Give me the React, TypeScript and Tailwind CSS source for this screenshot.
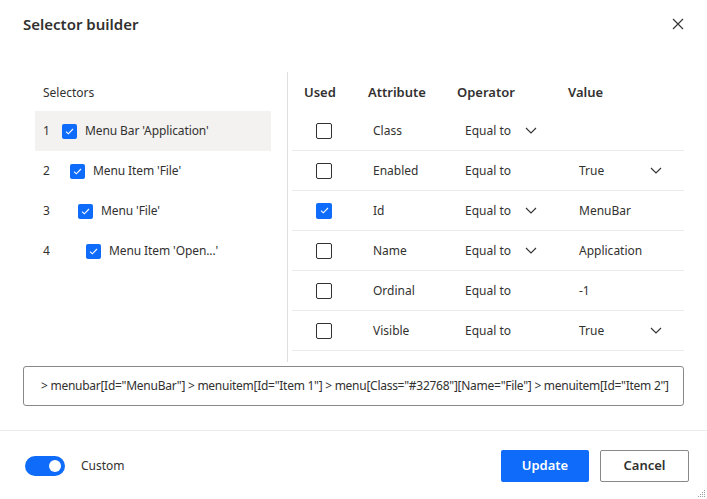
import { useState } from "react";

interface Attr {
    name: string;
    used: boolean;
    opDrop: boolean;
    value: string;
    valueDrop: boolean;
}

const selectors = [
    { n: 1, label: "Menu Bar 'Application'" },
    { n: 2, label: "Menu Item 'File'" },
    { n: 3, label: "Menu 'File'" },
    { n: 4, label: "Menu Item 'Open...'" },
];

const attrs: Attr[] = [
    { name: "Class", used: false, opDrop: true, value: "", valueDrop: false },
    { name: "Enabled", used: false, opDrop: false, value: "True", valueDrop: true },
    { name: "Id", used: true, opDrop: true, value: "MenuBar", valueDrop: false },
    { name: "Name", used: false, opDrop: true, value: "Application", valueDrop: false },
    { name: "Ordinal", used: false, opDrop: false, value: "-1", valueDrop: false },
    { name: "Visible", used: false, opDrop: false, value: "True", valueDrop: true },
];

const Check = ({ on, size = 15 }: { on: boolean; size?: number }) =>
    on ? (
        <span
            className="flex items-center justify-center rounded-[2px] bg-[#0f6cfa]"
            style={{ width: size, height: size }}
        >
            <svg width="9" height="7" viewBox="0 0 9 7" fill="none">
                <path d="M1 3.6L3.3 5.8L8 1" stroke="white" strokeWidth="1.1" />
            </svg>
        </span>
    ) : (
        <span
            className="block rounded-[2px] border border-[#323130] bg-white"
            style={{ width: size, height: size }}
        />
    );

const Chevron = () => (
    <svg width="12" height="7" viewBox="0 0 12 7" fill="none">
        <path d="M1 1L6 6L11 1" stroke="#323130" strokeWidth="1.1" />
    </svg>
);

export default function App() {
    const [custom, setCustom] = useState(true);
    const [active, setActive] = useState(1);

    return (
        <div
            className="relative h-[499px] w-[707px] overflow-hidden bg-white text-[#323130]"
            style={{ fontFamily: '"Noto Sans", "Open Sans", sans-serif' }}
        >
            {/* header */}
            <div className="flex h-[48px] items-center justify-between pl-[23px] pr-[19px]">
                <h1 className="text-[15px] font-semibold">Selector builder</h1>
                <button className="flex h-[20px] w-[20px] items-center justify-center">
                    <svg width="12" height="12" viewBox="0 0 12 12" fill="none">
                        <path d="M1 1L11 11M11 1L1 11" stroke="#323130" strokeWidth="1.1" />
                    </svg>
                </button>
            </div>

            {/* body */}
            <div className="mt-[24px] flex h-[290px]">
                <div className="w-[288px] border-r border-[#e1dfdd] pl-[35px] pr-[16px]">
                    <div className="flex h-[39px] items-center pl-[8px] pt-[2px] text-[12px]">Selectors</div>
                    {selectors.map((s, i) => (
                        <div
                            key={s.n}
                            onClick={() => setActive(s.n)}
                            className={`flex h-[40px] items-center pl-[8px] text-[12px] tracking-[-0.1px] ${active === s.n ? "bg-[#f3f2f1]" : ""}`}
                        >
                            <span className="w-[19px] text-[12px]">{s.n}</span>
                            <span style={{ marginLeft: i * 8 }}>
                                <Check on />
                            </span>
                            <span className="ml-[8px]">{s.label}</span>
                        </div>
                    ))}
                </div>

                <div className="pl-[4px]">
                    <div className="grid h-[39px] w-[392px] grid-cols-[76px_89px_111px_116px] items-center pt-[2px] text-[13px] font-semibold">
                        <span className="pl-[12px]">Used</span>
                        <span>Attribute</span>
                        <span>Operator</span>
                        <span>Value</span>
                    </div>
                    {attrs.map((a) => (
                        <div
                            key={a.name}
                            className="grid h-[40px] w-[392px] grid-cols-[76px_89px_111px_116px] items-center border-b border-[#edebe9] text-[12px]"
                        >
                            <span className="pl-[24px]">
                                <Check on={a.used} size={16} />
                            </span>
                            <span className="pl-[5px]">{a.name}</span>
                            <span className="flex items-center pl-[8px]">
                                <span className="w-[60px]">Equal to</span>
                                {a.opDrop && <Chevron />}
                            </span>
                            <span className="flex items-center pl-[11px]">
                                <span className="w-[71px]">{a.value}</span>
                                {a.valueDrop && <Chevron />}
                            </span>
                        </div>
                    ))}
                </div>
            </div>

            {/* selector text */}
            <div className="mx-[23px] mt-[4px] flex h-[40px] items-center overflow-hidden whitespace-nowrap rounded-[3px] border border-[#8a8886] pl-[17px] text-[12px] tracking-[-0.27px]">
                {'> menubar[Id="MenuBar"] > menuitem[Id="Item 1"] > menu[Class="#32768"][Name="File"] > menuitem[Id="Item 2"]'}
            </div>

            {/* footer */}
            <div className="mt-[24px] flex h-[69px] items-center justify-between border-t border-[#edebe9] pl-[25px] pr-[18px]">
                <div className="flex items-center pt-[2px]">
                    <button
                        onClick={() => setCustom(!custom)}
                        className={`flex h-[20px] w-[40px] items-center rounded-full px-[4px] ${custom ? "justify-end bg-[#0f6cfa]" : "justify-start border border-[#605e5c] bg-white"}`}
                    >
                        <span className={`h-[12px] w-[12px] rounded-full ${custom ? "bg-white" : "bg-[#605e5c]"}`} />
                    </button>
                    <span className="ml-[16px] text-[12px]">Custom</span>
                </div>
                <div className="flex gap-[11px] pt-[1px]">
                    <button className="h-[32px] w-[88px] rounded-[2px] bg-[#0f6cfa] text-[13px] font-semibold text-white">
                        Update
                    </button>
                    <button className="h-[32px] w-[89px] rounded-[2px] border border-[#8a8886] bg-white text-[13px] font-semibold">
                        Cancel
                    </button>
                </div>
            </div>

            {/* resize grip */}
            <svg className="absolute bottom-[2px] right-[2px]" width="7" height="7" viewBox="0 0 7 7">
                <g fill="#a19f9d">
                    <rect x="6" y="0" width="1" height="1" />
                    <rect x="4" y="2" width="1" height="1" />
                    <rect x="6" y="2" width="1" height="1" />
                    <rect x="2" y="4" width="1" height="1" />
                    <rect x="4" y="4" width="1" height="1" />
                    <rect x="6" y="4" width="1" height="1" />
                    <rect x="0" y="6" width="1" height="1" />
                    <rect x="2" y="6" width="1" height="1" />
                    <rect x="4" y="6" width="1" height="1" />
                    <rect x="6" y="6" width="1" height="1" />
                </g>
            </svg>
        </div>
    );
}
